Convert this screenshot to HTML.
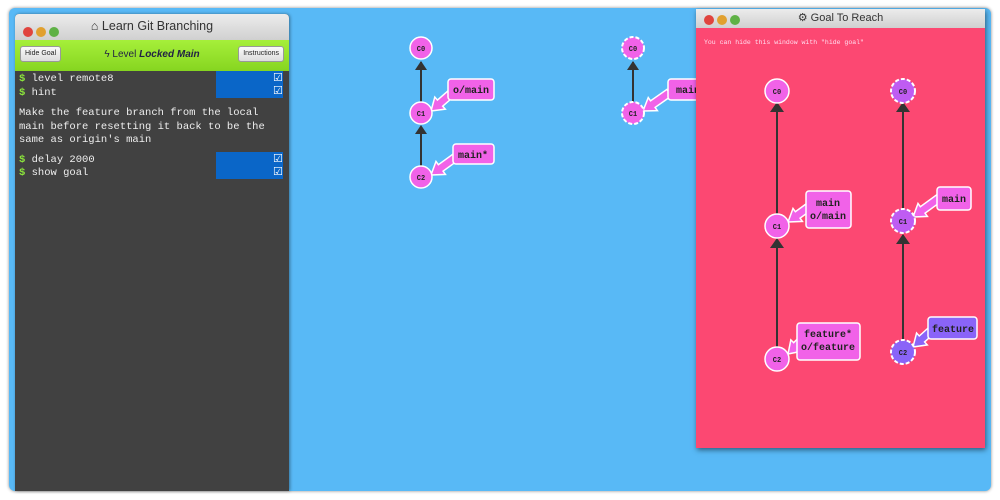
<!DOCTYPE html>
<html><head><meta charset="utf-8"><style>
*{margin:0;padding:0;box-sizing:border-box}
body{width:1000px;height:500px;background:#fff;position:relative;overflow:hidden;font-family:"Liberation Sans",sans-serif}
.frame{position:absolute;left:9px;top:8px;width:982px;height:483px;background:#58b9f6;border-radius:6px;box-shadow:0 0 3px #888}
.left{position:absolute;left:15px;top:14px;width:274px;height:477px;background:#414141;border-radius:4px 4px 0 0;box-shadow:1px 0 3px rgba(0,0,0,.4)}
.tb{height:26px;background:linear-gradient(#ececec,#d0d0d0);border-radius:4px 4px 0 0;position:relative;font-size:12.5px;color:#333;text-align:center;line-height:24px}
.dots{position:absolute;left:8px;top:7px}
.dots i{display:inline-block;width:10px;height:10px;border-radius:50%;margin-right:3px}
.r{background:#e0443e}.y{background:#e1a02f}.g{background:#5fb146}
.green{height:31px;background:linear-gradient(#a6ef3a,#86d520);position:relative;text-align:center;font-size:10px;line-height:30px;color:#224}
.btn{position:absolute;top:6px;height:16px;background:linear-gradient(#fafafa,#ddd);border:1px solid #999;border-radius:3px;font-size:7px;line-height:14px;padding:0 4px;color:#222}
.term{font-family:"Liberation Mono",monospace;font-size:10.5px;color:#eee;position:relative;padding-top:2px}
.ln{height:13.5px;line-height:13.5px;padding-left:4px;position:relative}
.ln b{color:#8ce63c}
.bl{position:absolute;left:201px;width:67px;background:#0a66c8}
.cb{position:absolute;right:6px;width:10px;height:10px;color:#fff;font-size:11px;line-height:10px;font-family:"DejaVu Sans",sans-serif;font-weight:bold}
.goal{position:absolute;left:696px;top:9px;width:289px;height:439px;background:#fc4872;box-shadow:1px 2px 5px rgba(0,0,0,.5)}
</style></head><body>
<div class="frame"></div>
<div class="left">
 <div class="tb"><div class="dots"><i class="r"></i><i class="y"></i><i class="g"></i></div>&#8962; Learn Git Branching</div>
 <div class="green"><div class="btn" style="left:5px">Hide Goal</div>ϟ Level <b><i>Locked Main</i></b><div class="btn" style="right:5px">Instructions</div></div>
 <div class="term">
  <div class="bl" style="top:0;height:27px"></div>
  <div class="bl" style="top:81px;height:27px"></div>
  <div class="cb" style="top:2px">☑</div><div class="cb" style="top:15px">☑</div>
  <div class="cb" style="top:83px">☑</div><div class="cb" style="top:96px">☑</div>
  <div class="ln"><b>$</b> level remote8</div>
  <div class="ln"><b>$</b> hint</div>
  <div style="height:7px"></div>
  <div class="ln">Make the feature branch from the local</div>
  <div class="ln">main before resetting it back to be the</div>
  <div class="ln">same as origin's main</div>
  <div style="height:6px"></div>
  <div class="ln"><b>$</b> delay 2000</div>
  <div class="ln"><b>$</b> show goal</div>
 </div>
</div>
<svg style="position:absolute;left:0;top:0" width="1000" height="500" font-family="Liberation Mono,monospace">
 <g stroke="#333" stroke-width="2">
  <line x1="421" y1="102" x2="421" y2="62"/><line x1="421" y1="166" x2="421" y2="127"/>
  <line x1="633" y1="102" x2="633" y2="62"/>
 </g>
 <g fill="#333"><path d="M415,70L421,61L427,70z"/><path d="M415,134L421,125L427,134z"/><path d="M627,70L633,61L639,70z"/></g>
 <g stroke="#fff" stroke-width="1.5" fill="#f162e8">
  <path transform="translate(431,111) rotate(139)" d="M0,0L-12,-8L-12,-4L-28,-4L-28,4L-12,4L-12,8Z"/>
  <path transform="translate(431,175) rotate(144)" d="M0,0L-12,-8L-12,-4L-30,-4L-30,4L-12,4L-12,8Z"/>
  <path transform="translate(643,111) rotate(145)" d="M0,0L-12,-8L-12,-4L-32,-4L-32,4L-12,4L-12,8Z"/>
  <rect x="448" y="79" width="46" height="21" rx="3"/><rect x="453" y="144" width="41" height="20" rx="3"/>
  <rect x="668" y="79" width="40" height="21" rx="3"/>
  <circle cx="421" cy="48" r="11"/><circle cx="421" cy="113" r="11"/><circle cx="421" cy="177" r="11"/>
 </g>
 <g stroke="#fff" stroke-width="2" fill="#f162e8" stroke-dasharray="4 2">
  <circle cx="633" cy="48" r="11"/><circle cx="633" cy="113" r="11"/>
 </g>
 <g font-size="10" fill="#222" text-anchor="middle" font-weight="bold">
  <text x="471" y="93">o/main</text><text x="473" y="158">main*</text><text x="688" y="93">main</text>
 </g>
 <g font-size="7" fill="#222" text-anchor="middle" font-weight="bold">
  <text x="421" y="51">C0</text><text x="421" y="116">C1</text><text x="421" y="180">C2</text>
  <text x="633" y="51">C0</text><text x="633" y="116">C1</text>
 </g>
</svg>
<div class="goal">
 <div class="tb" style="height:19px;line-height:18px;font-size:11px;border-radius:0"><div class="dots" style="top:4px"><i class="r"></i><i class="y"></i><i class="g"></i></div>⚙ Goal To Reach</div>
 <div style="font-family:'Liberation Mono',monospace;font-size:6.5px;color:#fde;position:absolute;left:8px;top:30px">You can hide this window with "hide goal"</div>
</div>
<svg style="position:absolute;left:0;top:0" width="1000" height="500" font-family="Liberation Mono,monospace">
 <g stroke="#333" stroke-width="2">
  <line x1="777" y1="214" x2="777" y2="104"/><line x1="777" y1="347" x2="777" y2="240"/>
  <line x1="903" y1="209" x2="903" y2="104"/><line x1="903" y1="340" x2="903" y2="235"/>
 </g>
 <g fill="#333"><path d="M770,112L777,102L784,112z"/><path d="M770,248L777,238L784,248z"/><path d="M896,112L903,102L910,112z"/><path d="M896,244L903,234L910,244z"/></g>
 <g stroke="#fff" stroke-width="1.5" fill="#f162e8">
  <path transform="translate(788,222) rotate(144)" d="M0,0L-12,-8L-12,-4L-26,-4L-26,4L-12,4L-12,8Z"/>
  <path transform="translate(788,354) rotate(135)" d="M0,0L-12,-8L-12,-4L-16,-4L-16,4L-12,4L-12,8Z"/>
  <path transform="translate(913,217) rotate(144)" d="M0,0L-12,-8L-12,-4L-32,-4L-32,4L-12,4L-12,8Z"/>
  <rect x="806" y="191" width="45" height="37" rx="3"/><rect x="797" y="323" width="63" height="37" rx="3"/>
  <rect x="937" y="187" width="34" height="23" rx="3"/>
  <circle cx="777" cy="91" r="12"/><circle cx="777" cy="226" r="12"/><circle cx="777" cy="359" r="12"/>
 </g>
 <g stroke="#fff" stroke-width="2" fill="#bf5cf2" stroke-dasharray="4 2">
  <circle cx="903" cy="91" r="12"/><circle cx="903" cy="221" r="12"/>
 </g>
 <g stroke="#fff" stroke-width="1.5" fill="#8a64f8">
  <path transform="translate(913,347) rotate(138)" d="M0,0L-12,-8L-12,-4L-26,-4L-26,4L-12,4L-12,8Z"/>
  <rect x="928" y="317" width="49" height="22" rx="3"/>
  <circle cx="903" cy="352" r="12" stroke-width="2" stroke-dasharray="4 2"/>
 </g>
 <g font-size="10" fill="#222" text-anchor="middle" font-weight="bold">
  <text x="828" y="206">main</text><text x="828" y="219">o/main</text>
  <text x="828" y="337">feature*</text><text x="828" y="350">o/feature</text>
  <text x="954" y="202">main</text><text x="953" y="332">feature</text>
 </g>
 <g font-size="7" fill="#222" text-anchor="middle" font-weight="bold">
  <text x="777" y="94">C0</text><text x="777" y="229">C1</text><text x="777" y="362">C2</text>
  <text x="903" y="94">C0</text><text x="903" y="224">C1</text><text x="903" y="355">C2</text>
 </g>
</svg>
</body></html>
